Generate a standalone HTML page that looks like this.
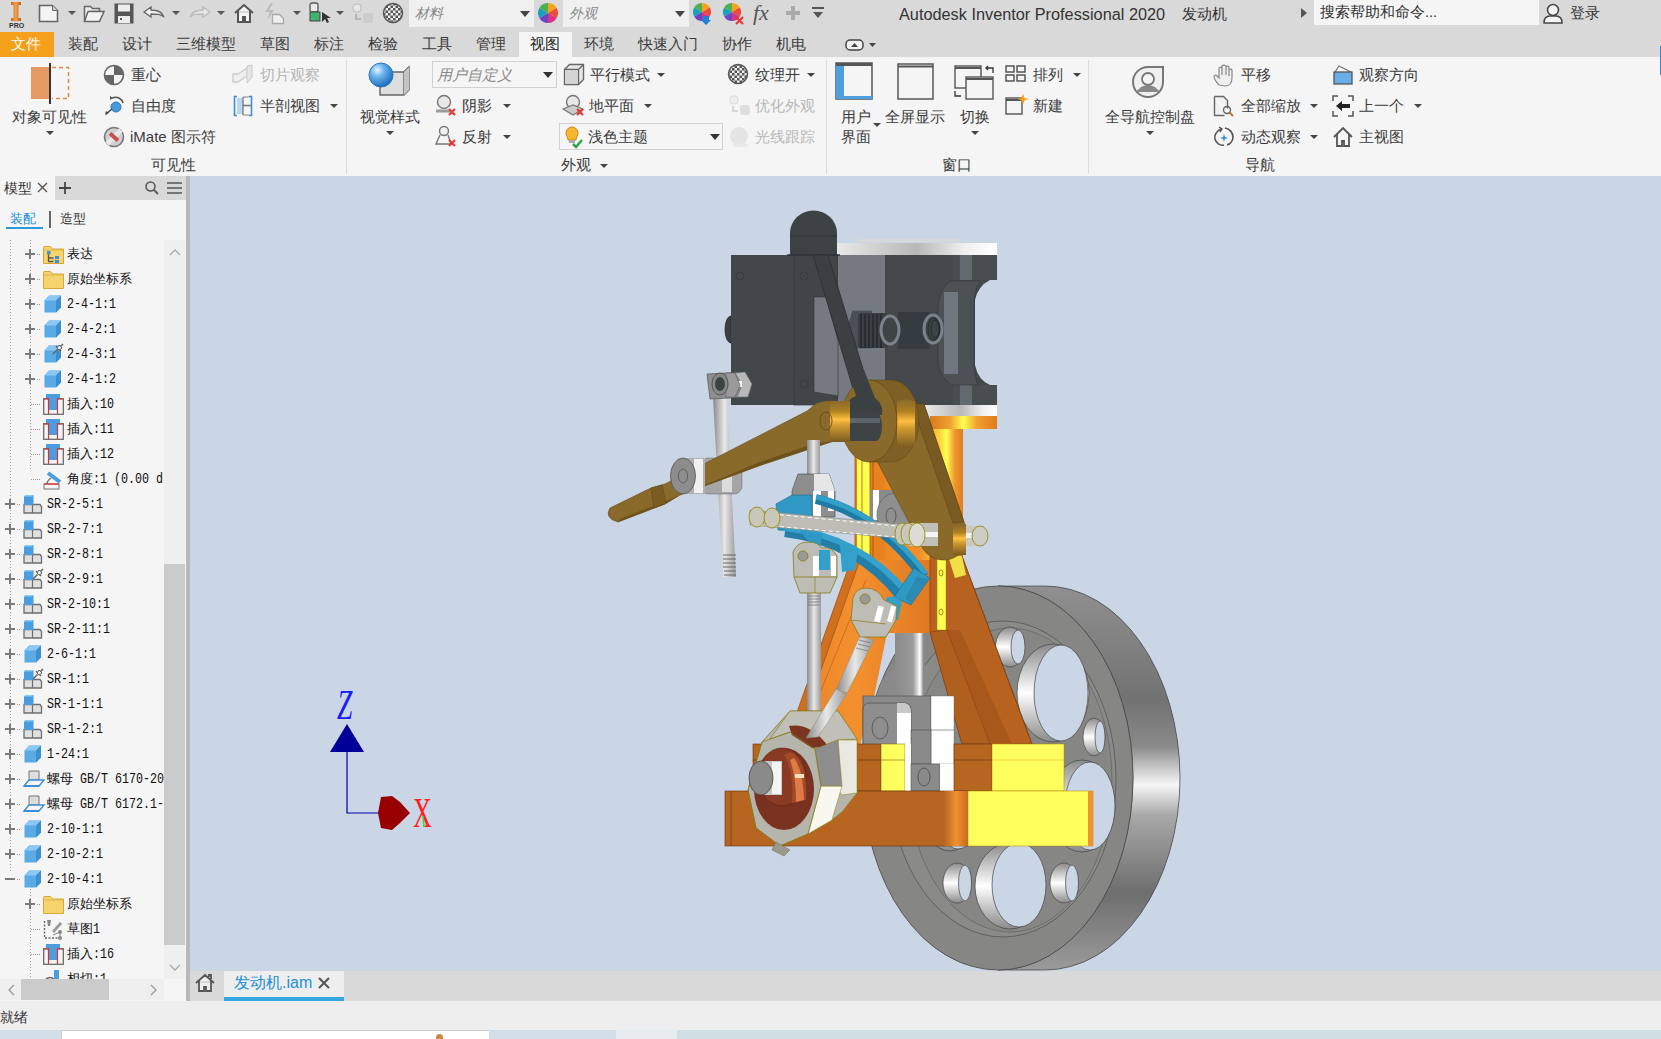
<!DOCTYPE html>
<html><head><meta charset="utf-8">
<style>
*{margin:0;padding:0;box-sizing:border-box}
html,body{width:1661px;height:1039px;overflow:hidden;background:#f5f5f5;font-family:"Liberation Sans",sans-serif;color:#3b3b3b}
.a{position:absolute}
.t{position:absolute;white-space:nowrap;font-size:15px;line-height:18px}
.m{font-family:"Liberation Mono",monospace;font-size:14.5px;transform:scaleX(.805);transform-origin:0 50%}
svg{position:absolute;overflow:visible}
.arr{position:absolute;width:0;height:0;border-left:4px solid transparent;border-right:4px solid transparent;border-top:4px solid #444}
</style></head><body>
<!-- title bar -->
<div class="a" style="left:0;top:0;width:1661px;height:32px;background:#d9d9d9"></div>
<!-- tab row -->
<div class="a" style="left:0;top:32px;width:1661px;height:25px;background:#d9d9d9"></div>
<div class="a" style="left:0;top:32px;width:54px;height:25px;background:#f5a01a"></div>
<div class="a" style="left:519px;top:32px;width:53px;height:25px;background:#f5f5f5"></div>
<!-- ribbon -->
<div class="a" style="left:0;top:57px;width:1661px;height:119px;background:#f5f5f5"></div>

<!-- title bar content -->
<svg style="left:8px;top:2px" width="18" height="28" viewBox="0 0 18 28">
<defs><linearGradient id="ig" x1="0" x2="1"><stop offset="0" stop-color="#c96a1a"/><stop offset=".5" stop-color="#f0a050"/><stop offset="1" stop-color="#b85a10"/></linearGradient></defs>
<path d="M3 0h10v3h-2.5v13h2.5v3h-10v-3h2.5v-13h-2.5z" fill="url(#ig)"/>
<text x="1" y="26" font-size="7" font-family="Liberation Sans" font-weight="bold" fill="#333">PRO</text>
</svg>
<svg style="left:38px;top:3px" width="22" height="20"><path d="M1.5 2.5h13l5 5v11h-18z" fill="#f4f4f4" stroke="#666" stroke-width="1.6"/><path d="M14.5 2.5v5h5" fill="#ccc" stroke="#666" stroke-width="1"/></svg>
<div class="arr" style="left:68px;top:11px;border-top-color:#555"></div>
<svg style="left:83px;top:3px" width="22" height="20"><path d="M1.5 3.5h6l2 2h7v3h-10l-5 10z" fill="#eee" stroke="#666" stroke-width="1.5"/><path d="M5 8.5h16l-4.5 10h-15z" fill="#f4f4f4" stroke="#666" stroke-width="1.5"/></svg>
<svg style="left:114px;top:3px" width="21" height="21"><rect x="0.5" y="0.5" width="19" height="20" fill="#555"/><rect x="4" y="1.5" width="12" height="7" fill="#eee"/><rect x="4" y="13" width="12" height="7" fill="#eee"/><rect x="6" y="15" width="2" height="2" fill="#555"/></svg>
<svg style="left:143px;top:6px" width="22" height="14"><path d="M1 6l7-5v3c6 0 11 1 13 7c-3-3-7-3-13-3v3z" fill="#f0f0f0" stroke="#666" stroke-width="1.3"/></svg>
<div class="arr" style="left:172px;top:11px;border-top-color:#555"></div>
<svg style="left:189px;top:6px" width="22" height="14"><path d="M21 6l-7-5v3c-6 0-11 1-13 7c3-3 7-3 13-3v3z" fill="#e6e6e6" stroke="#bbb" stroke-width="1.3"/></svg>
<div class="arr" style="left:217px;top:11px;border-top-color:#555"></div>
<svg style="left:233px;top:3px" width="22" height="21"><path d="M2 10l9-8 9 8M5 8v11h5v-5h2v5h5v-11" fill="#f4f4f4" stroke="#555" stroke-width="2"/></svg>
<svg style="left:263px;top:3px" width="24" height="21"><path d="M8 0l-6 9h5l-3 8 7-10h-5l4-7z" fill="#bbb"/><path d="M9.5 11.5h7l4 4v5h-11z" fill="#eee" stroke="#aaa" stroke-width="1.3"/></svg>
<div class="arr" style="left:293px;top:11px;border-top-color:#555"></div>
<svg style="left:309px;top:2px" width="22" height="22"><rect x="1" y="1" width="8" height="9" rx="2" fill="#e8e8e8" stroke="#555" stroke-width="1.3"/><rect x="1" y="10" width="10" height="9" fill="#45b26b" stroke="#444" stroke-width="1"/><path d="M13 10l0 10 3-3 2 4 2-1-2-4h4z" fill="#333"/></svg>
<div class="arr" style="left:336px;top:11px;border-top-color:#555"></div>
<svg style="left:352px;top:3px" width="22" height="20"><rect x="1" y="1" width="8" height="8" rx="3" fill="#e6e6e6" stroke="#bbb"/><path d="M4 11v5h5" fill="none" stroke="#aaa" stroke-width="1.5"/><rect x="11" y="10" width="10" height="10" rx="3" fill="#ccc"/></svg>
<svg style="left:383px;top:3px" width="22" height="22"><defs><pattern id="ck" width="5" height="5" patternUnits="userSpaceOnUse"><rect width="5" height="5" fill="#eee"/><rect width="2.5" height="2.5" fill="#555"/><rect x="2.5" y="2.5" width="2.5" height="2.5" fill="#555"/></pattern></defs><circle cx="10" cy="10" r="9.5" fill="url(#ck)" stroke="#555" stroke-width="1.5"/></svg>
<div class="a" style="left:409px;top:0;width:125px;height:27px;background:#f0f0f0"></div>
<div class="t" style="left:415px;top:4px;font-style:italic;color:#888;font-size:14px">材料</div>
<div class="arr" style="left:520px;top:11px;border-left-width:5px;border-right-width:5px;border-top:6px solid #444"></div>
<svg style="left:537px;top:2px" width="22" height="22"><g transform="translate(11,11)">
<path d="M0 0L0-10A10 10 0 0 1 8.66-5z" fill="#f7a21b"/><path d="M0 0L8.66-5A10 10 0 0 1 8.66 5z" fill="#e74c3c"/><path d="M0 0L8.66 5A10 10 0 0 1 0 10z" fill="#d63384"/><path d="M0 0L0 10A10 10 0 0 1-8.66 5z" fill="#6f42c1"/><path d="M0 0L-8.66 5A10 10 0 0 1-8.66-5z" fill="#17a2b8"/><path d="M0 0L-8.66-5A10 10 0 0 1 0-10z" fill="#4caf50"/></g></svg>
<div class="a" style="left:563px;top:0;width:126px;height:27px;background:#f0f0f0"></div>
<div class="t" style="left:569px;top:4px;font-style:italic;color:#888;font-size:14px">外观</div>
<div class="arr" style="left:675px;top:11px;border-left-width:5px;border-right-width:5px;border-top:6px solid #444"></div>
<svg style="left:692px;top:2px" width="24" height="24"><g transform="translate(10,10)">
<path d="M0 0L0-9A9 9 0 0 1 7.8-4.5z" fill="#f7a21b"/><path d="M0 0L7.8-4.5A9 9 0 0 1 7.8 4.5z" fill="#e74c3c"/><path d="M0 0L7.8 4.5A9 9 0 0 1 0 9z" fill="#d63384"/><path d="M0 0L0 9A9 9 0 0 1-7.8 4.5z" fill="#6f42c1"/><path d="M0 0L-7.8 4.5A9 9 0 0 1-7.8-4.5z" fill="#17a2b8"/><path d="M0 0L-7.8-4.5A9 9 0 0 1 0-9z" fill="#4caf50"/></g><path d="M11 14h6v4h2l-5 5-5-5h2z" fill="#1e7fd8"/></svg>
<svg style="left:722px;top:2px" width="24" height="24"><g transform="translate(10,10)">
<path d="M0 0L0-9A9 9 0 0 1 7.8-4.5z" fill="#f7a21b"/><path d="M0 0L7.8-4.5A9 9 0 0 1 7.8 4.5z" fill="#e74c3c"/><path d="M0 0L7.8 4.5A9 9 0 0 1 0 9z" fill="#d63384"/><path d="M0 0L0 9A9 9 0 0 1-7.8 4.5z" fill="#6f42c1"/><path d="M0 0L-7.8 4.5A9 9 0 0 1-7.8-4.5z" fill="#17a2b8"/><path d="M0 0L-7.8-4.5A9 9 0 0 1 0-9z" fill="#4caf50"/></g><path d="M14 15l7 7M21 15l-7 7" stroke="#e53935" stroke-width="2.2"/></svg>
<div class="t" style="left:753px;top:1px;font-family:'Liberation Serif',serif;font-style:italic;font-size:22px;color:#555;line-height:24px">fx</div>
<svg style="left:785px;top:5px" width="16" height="16"><path d="M8 1v14M1 8h14" stroke="#aaa" stroke-width="4"/></svg>
<svg style="left:811px;top:7px" width="14" height="12"><path d="M1 1h12" stroke="#555" stroke-width="2"/><path d="M2 5h10l-5 6z" fill="#555"/></svg>
<div class="t" style="left:899px;top:5px;font-size:16.3px;color:#333">Autodesk Inventor Professional 2020</div>
<div class="t" style="left:1182px;top:5px;font-size:15px;color:#333">发动机</div>
<svg style="left:1300px;top:7px" width="8" height="12"><path d="M1 1l6 5-6 5z" fill="#555"/></svg>
<div class="a" style="left:1314px;top:0;width:225px;height:25px;background:#f5f5f5"></div>
<div class="t" style="left:1320px;top:3px;font-size:14.5px;color:#333">搜索帮助和命令...</div>
<svg style="left:1543px;top:2px" width="22" height="22"><circle cx="10" cy="8" r="5.5" fill="#f4f4f4" stroke="#444" stroke-width="1.5"/><path d="M1 21c0-6 4-7 6-7h6c2 0 6 1 6 7z" fill="#f4f4f4" stroke="#444" stroke-width="1.5"/></svg>
<div class="t" style="left:1570px;top:4px;font-size:15px;color:#333">登录</div>
<!-- tabs -->
<div class="t" style="left:11px;top:35px;color:#fff">文件</div>
<div class="t" style="left:68px;top:35px">装配</div>
<div class="t" style="left:122px;top:35px">设计</div>
<div class="t" style="left:176px;top:35px">三维模型</div>
<div class="t" style="left:260px;top:35px">草图</div>
<div class="t" style="left:314px;top:35px">标注</div>
<div class="t" style="left:368px;top:35px">检验</div>
<div class="t" style="left:422px;top:35px">工具</div>
<div class="t" style="left:476px;top:35px">管理</div>
<div class="t" style="left:530px;top:35px;color:#222">视图</div>
<div class="t" style="left:584px;top:35px">环境</div>
<div class="t" style="left:638px;top:35px">快速入门</div>
<div class="t" style="left:722px;top:35px">协作</div>
<div class="t" style="left:776px;top:35px">机电</div>
<svg style="left:845px;top:39px" width="32" height="12"><rect x="1" y="1" width="17" height="10" rx="4" fill="#f0f0f0" stroke="#444" stroke-width="1.5"/><path d="M6 8l3.5-4 3.5 4z" fill="#444"/><path d="M24 4h7l-3.5 4z" fill="#444"/></svg>
<div class="a" style="left:1660px;top:46px;width:1px;height:29px;background:#2a8fe0"></div>

<!-- ribbon content -->
<div class="a" style="left:346px;top:60px;width:1px;height:114px;background:#dcdcdc"></div>
<div class="a" style="left:826px;top:60px;width:1px;height:114px;background:#dcdcdc"></div>
<div class="a" style="left:1088px;top:60px;width:1px;height:114px;background:#dcdcdc"></div>
<!-- visibility panel -->
<svg style="left:30px;top:62px" width="42" height="44"><rect x="1" y="5" width="18" height="32" fill="#e49a62"/><path d="M20 1v41" stroke="#333" stroke-width="2"/><path d="M22 5.5h16.5v31h-16.5" fill="none" stroke="#e8874a" stroke-width="1.5" stroke-dasharray="4 3"/></svg>
<div class="t" style="left:12px;top:108px">对象可见性</div>
<div class="arr" style="left:46px;top:131px"></div>
<svg style="left:103px;top:64px" width="22" height="22"><circle cx="11" cy="11" r="9.5" fill="#f4f4f4" stroke="#666" stroke-width="1.6"/><path d="M11 11V1.5A9.5 9.5 0 0 1 20.5 11z" fill="#666"/><path d="M11 11V20.5A9.5 9.5 0 0 1 1.5 11z" fill="#666"/></svg>
<div class="t" style="left:131px;top:66px">重心</div>
<svg style="left:104px;top:95px" width="22" height="22"><path d="M8 3c6-2 10 1 11 5" fill="none" stroke="#555" stroke-width="1.5"/><path d="M6 1l3 2-3 2z" fill="#555"/><circle cx="12" cy="12" r="5" fill="#4a9ad8" stroke="#2a7ac0"/><path d="M2 19l6-5" stroke="#444" stroke-width="1.5"/><path d="M1 20l1-4 3 2z" fill="#444"/></svg>
<div class="t" style="left:131px;top:97px">自由度</div>
<svg style="left:103px;top:126px" width="22" height="22"><circle cx="11" cy="11" r="9.5" fill="#d0d0d0" stroke="#777" stroke-width="1.6"/><path d="M4 18L18 4" stroke="#e8e8e8" stroke-width="5"/><path d="M7 7.5l8 7" stroke="#c9504c" stroke-width="4"/></svg>
<div class="t" style="left:130px;top:128px">iMate 图示符</div>
<svg style="left:232px;top:64px" width="22" height="22"><path d="M1 10h5l9-6v8l-9 6h-5z" fill="#eee" stroke="#ccc" stroke-width="1.3"/><path d="M15 2l5-1v12l-5 6z" fill="#e6e6e6" stroke="#ccc"/></svg>
<div class="t" style="left:260px;top:66px;color:#b4b4b4">切片观察</div>
<svg style="left:233px;top:95px" width="20" height="22"><path d="M4 1.5h-2.5v19h2.5M16 1.5h2.5v19h-2.5" fill="none" stroke="#3a8fd8" stroke-width="1.6"/><rect x="4" y="3" width="6" height="16" fill="#b8d6f0"/><path d="M10 2v18M10 10.5h8" stroke="#777" stroke-width="1.3"/><path d="M10 2h6M10 20h6" stroke="#888"/></svg>
<div class="t" style="left:260px;top:97px">半剖视图</div>
<div class="arr" style="left:330px;top:104px"></div>
<div class="t" style="left:151px;top:156px">可见性</div>
<!-- appearance panel -->
<svg style="left:368px;top:62px" width="46" height="44"><defs><radialGradient id="bl" cx=".35" cy=".3" r=".7"><stop offset="0" stop-color="#e8f4ff"/><stop offset=".4" stop-color="#6ab4ee"/><stop offset="1" stop-color="#1f6fc0"/></radialGradient></defs>
<path d="M12 10h24l5-5v23l-5 5h-24z" fill="#ddd" stroke="#666" stroke-width="1.4"/><path d="M36 10v23M36 10l5-5" stroke="#666" stroke-width="1.4" fill="none"/><path d="M36 10l5-5v23l-5 5z" fill="#c4c4c4"/>
<circle cx="13" cy="13" r="12" fill="url(#bl)" stroke="#2a74bd" stroke-width="1"/></svg>
<div class="t" style="left:360px;top:108px">视觉样式</div>
<div class="arr" style="left:386px;top:131px"></div>
<div class="a" style="left:432px;top:61px;width:125px;height:27px;border:1px solid #d2d2d2;background:#f5f5f5"></div>
<div class="t" style="left:437px;top:66px;font-style:italic;color:#888">用户自定义</div>
<div class="arr" style="left:543px;top:72px;border-left-width:5px;border-right-width:5px;border-top:6px solid #333"></div>
<svg style="left:435px;top:94px" width="22" height="24"><circle cx="9" cy="8" r="6.5" fill="#e8e8e8" stroke="#777" stroke-width="1.4"/><path d="M1 17h14" stroke="#999" stroke-width="3"/><path d="M14 15l6 6M20 15l-6 6" stroke="#e53935" stroke-width="2.2"/></svg>
<div class="t" style="left:462px;top:97px">阴影</div>
<div class="arr" style="left:503px;top:104px"></div>
<svg style="left:435px;top:125px" width="22" height="24"><circle cx="9" cy="6" r="4.5" fill="#eee" stroke="#777" stroke-width="1.4"/><path d="M5 10l-4 9h15l-3-9" fill="none" stroke="#777" stroke-width="1.4"/><path d="M14 15l6 6M20 15l-6 6" stroke="#e53935" stroke-width="2.2"/></svg>
<div class="t" style="left:462px;top:128px">反射</div>
<div class="arr" style="left:503px;top:135px"></div>
<svg style="left:563px;top:63px" width="22" height="22"><path d="M1.5 6.5l5-5h14v15l-5 5h-14z" fill="#e8e8e8" stroke="#666" stroke-width="1.4"/><path d="M1.5 6.5h14v15M15.5 6.5l5-5" fill="none" stroke="#666" stroke-width="1.4"/><rect x="2.3" y="7.3" width="12.5" height="13.5" fill="#d4d4d4"/></svg>
<div class="t" style="left:590px;top:66px">平行模式</div>
<div class="arr" style="left:657px;top:73px"></div>
<svg style="left:562px;top:94px" width="24" height="24"><circle cx="11" cy="8" r="6.5" fill="#e8e8e8" stroke="#777" stroke-width="1.4"/><path d="M1 15l10 6 10-6-10-4z" fill="#ccc" stroke="#777" stroke-width="1.2"/><path d="M15 15l6 6M21 15l-6 6" stroke="#e53935" stroke-width="2.2"/></svg>
<div class="t" style="left:589px;top:97px">地平面</div>
<div class="arr" style="left:644px;top:104px"></div>
<div class="a" style="left:559px;top:123px;width:164px;height:27px;border:1px solid #d2d2d2;background:#f5f5f5"></div>
<svg style="left:565px;top:126px" width="20" height="24"><path d="M7 1a6 6 0 0 1 6 6c0 3-2 4-2 7h-8c0-3-2-4-2-7a6 6 0 0 1 6-6z" fill="#f5b730" stroke="#c98a10"/><rect x="4" y="14" width="6" height="3" fill="#aaa"/><path d="M8 18l3 3 6-7" fill="none" stroke="#2ea44f" stroke-width="2.5"/></svg>
<div class="t" style="left:588px;top:128px">浅色主题</div>
<div class="arr" style="left:710px;top:134px;border-left-width:5px;border-right-width:5px;border-top:6px solid #333"></div>
<svg style="left:727px;top:63px" width="22" height="22"><circle cx="11" cy="11" r="9.5" fill="url(#ck)" stroke="#555" stroke-width="1.5"/></svg>
<div class="t" style="left:755px;top:66px">纹理开</div>
<div class="arr" style="left:807px;top:73px"></div>
<svg style="left:729px;top:95px" width="22" height="22"><rect x="1" y="1" width="8" height="8" rx="3" fill="#eee" stroke="#ddd"/><path d="M4 11v5h5" fill="none" stroke="#ccc" stroke-width="1.5"/><rect x="11" y="10" width="10" height="10" rx="3" fill="#ddd"/></svg>
<div class="t" style="left:755px;top:97px;color:#b8b8b8">优化外观</div>
<svg style="left:729px;top:126px" width="22" height="22"><circle cx="10" cy="10" r="9" fill="#e4e4e4"/><ellipse cx="12" cy="19" rx="8" ry="2" fill="#e8e8e8"/></svg>
<div class="t" style="left:755px;top:128px;color:#b8b8b8">光线跟踪</div>
<div class="t" style="left:561px;top:156px">外观</div>
<div class="arr" style="left:600px;top:164px"></div>
<!-- window panel -->
<svg style="left:835px;top:62px" width="40" height="40"><rect x="1" y="1" width="36" height="36" fill="#f5f5f5" stroke="#555" stroke-width="1.5"/><rect x="1" y="1" width="36" height="3" fill="#555"/><rect x="1" y="4" width="8" height="33" fill="#4f9fe0"/><rect x="1" y="34" width="36" height="3" fill="#4f9fe0"/></svg>
<div class="t" style="left:841px;top:108px">用户</div>
<div class="t" style="left:841px;top:128px">界面</div>
<div class="arr" style="left:873px;top:123px"></div>
<svg style="left:897px;top:63px" width="38" height="38"><rect x="1" y="1" width="35" height="35" fill="#f5f5f5" stroke="#555" stroke-width="1.5"/><path d="M1 3.5h35" stroke="#555" stroke-width="2"/></svg>
<div class="t" style="left:885px;top:108px">全屏显示</div>
<svg style="left:954px;top:63px" width="42" height="38"><rect x="1" y="3" width="26" height="22" fill="#f5f5f5" stroke="#555" stroke-width="1.4"/><path d="M1 5h26" stroke="#555" stroke-width="2"/><rect x="12" y="14" width="27" height="22" fill="#f5f5f5" stroke="#555" stroke-width="1.4"/><path d="M12 16h27" stroke="#555" stroke-width="2"/><path d="M32 5h7v5M34 3l-2 2 2 2" fill="none" stroke="#333" stroke-width="1.3"/><path d="M1 28v5h6" fill="none" stroke="#333" stroke-width="1.3"/></svg>
<div class="t" style="left:960px;top:108px">切换</div>
<div class="arr" style="left:971px;top:131px"></div>
<svg style="left:1005px;top:65px" width="22" height="18"><rect x="1" y="1" width="8" height="6" fill="none" stroke="#555" stroke-width="1.5"/><rect x="12" y="1" width="8" height="6" fill="none" stroke="#555" stroke-width="1.5"/><rect x="1" y="10" width="8" height="6" fill="none" stroke="#555" stroke-width="1.5"/><rect x="12" y="10" width="8" height="6" fill="none" stroke="#555" stroke-width="1.5"/></svg>
<div class="t" style="left:1033px;top:66px">排列</div>
<div class="arr" style="left:1073px;top:73px"></div>
<svg style="left:1005px;top:94px" width="24" height="22"><rect x="1" y="4" width="16" height="16" fill="#f5f5f5" stroke="#555" stroke-width="1.4"/><path d="M1 6h16" stroke="#555" stroke-width="2"/><path d="M18 0l1.5 4 4 1-4 1.5-1.5 4-1.5-4-4-1.5 4-1z" fill="#f5a01a"/></svg>
<div class="t" style="left:1033px;top:97px">新建</div>
<div class="t" style="left:942px;top:156px">窗口</div>
<!-- navigate panel -->
<svg style="left:1131px;top:65px" width="36" height="34"><path d="M17 2a15 15 0 1 0 15 15v-15z" fill="#f0f0f0" stroke="#777" stroke-width="2"/><circle cx="17" cy="14" r="6" fill="#f5f5f5" stroke="#777" stroke-width="1.8"/><path d="M6 27c3-5 7-6 11-6s8 1 11 6" fill="#888" stroke="#777"/></svg>
<div class="t" style="left:1105px;top:108px">全导航控制盘</div>
<div class="arr" style="left:1146px;top:131px"></div>
<svg style="left:1213px;top:65px" width="22" height="22"><path d="M6 20c-3-3-5-7-5-9l2-1 3 3v-10l2-1 1 1v7v-9l2-1 2 1v9v-8l2-1 1 1v9v-6l2-1 1 1v8c0 5-3 8-7 8z" fill="#eee" stroke="#888" stroke-width="1.2"/></svg>
<div class="t" style="left:1241px;top:66px">平移</div>
<svg style="left:1213px;top:95px" width="22" height="22"><path d="M1.5 1.5h9l4 4v8M1.5 1.5v19h10" fill="#f0f0f0" stroke="#666" stroke-width="1.4"/><circle cx="14" cy="15" r="3.5" fill="none" stroke="#666" stroke-width="1.4"/><path d="M16.5 17.5l3.5 3.5" stroke="#c96a1a" stroke-width="2"/></svg>
<div class="t" style="left:1241px;top:97px">全部缩放</div>
<div class="arr" style="left:1310px;top:104px"></div>
<svg style="left:1213px;top:126px" width="22" height="22"><path d="M8 3c-5 2-7 7-6 10 1 4 5 7 9 6" fill="none" stroke="#555" stroke-width="1.6"/><path d="M12 2c5 1 8 5 8 9s-3 7-6 8" fill="none" stroke="#555" stroke-width="1.6"/><path d="M6 1l3 2-2 3" fill="none" stroke="#555" stroke-width="1.4"/><path d="M11 8l1 3 3 1-3 1-1 3-1-3-3-1 3-1z" fill="#3a8fd8"/></svg>
<div class="t" style="left:1241px;top:128px">动态观察</div>
<div class="arr" style="left:1310px;top:135px"></div>
<svg style="left:1332px;top:64px" width="22" height="22"><path d="M3 8l4-6 12 6" fill="none" stroke="#777" stroke-width="1.3"/><rect x="2" y="8" width="18" height="12" fill="#6aaee8" stroke="#555" stroke-width="1.3"/></svg>
<div class="t" style="left:1359px;top:66px">观察方向</div>
<svg style="left:1332px;top:95px" width="22" height="22"><path d="M1 6v-5h5M16 1h5v5M21 16v5h-5M6 21h-5v-5" fill="none" stroke="#555" stroke-width="1.5"/><path d="M4 11l6-5v3h8v4h-8v3z" fill="#222"/></svg>
<div class="t" style="left:1359px;top:97px">上一个</div>
<div class="arr" style="left:1414px;top:104px"></div>
<svg style="left:1332px;top:126px" width="22" height="22"><path d="M2 11l9-9 9 9M5 8v12h5v-5h2v5h5v-12" fill="#f4f4f4" stroke="#555" stroke-width="1.8"/></svg>
<div class="t" style="left:1359px;top:128px">主视图</div>
<div class="t" style="left:1245px;top:156px">导航</div>
<!-- browser panel -->
<div class="a" style="left:0;top:176px;width:186px;height:824px;background:#f5f5f5"></div>
<div class="a" style="left:186px;top:176px;width:4px;height:825px;background:#b8b8b8"></div>
<!-- browser -->
<div class="a" style="left:0;top:176px;width:186px;height:24px;background:#f5f5f5"></div>
<div class="a" style="left:55px;top:176px;width:131px;height:24px;background:#d9d9d9"></div>
<div class="t" style="left:4px;top:179px;font-size:14px;color:#333">模型</div>
<svg style="left:37px;top:182px" width="11" height="11"><path d="M1 1l9 9M10 1l-9 9" stroke="#555" stroke-width="1.4"/></svg>
<svg style="left:59px;top:182px" width="12" height="12"><path d="M6 0v12M0 6h12" stroke="#444" stroke-width="1.8"/></svg>
<svg style="left:145px;top:181px" width="14" height="14"><circle cx="5.5" cy="5.5" r="4.5" fill="none" stroke="#555" stroke-width="1.5"/><path d="M9 9l4 4" stroke="#555" stroke-width="1.8"/></svg>
<svg style="left:167px;top:182px" width="15" height="12"><path d="M0 1h15M0 6h15M0 11h15" stroke="#555" stroke-width="1.7"/></svg>
<div class="t" style="left:10px;top:210px;font-size:13px;color:#1a8fd6">装配</div>
<div class="a" style="left:6px;top:227px;width:37px;height:2px;background:#2a9ae0"></div>
<div class="a" style="left:49px;top:211px;width:2px;height:17px;background:#666"></div>
<div class="t" style="left:60px;top:210px;font-size:13px;color:#333">造型</div>
<div class="a" style="left:0;top:240px;width:164px;height:739px;overflow:hidden">
<div class="a" style="left:10px;top:0px;width:1px;height:632px;background-image:linear-gradient(#a0a0a0 1px,transparent 1px);background-size:1px 3px"></div>
<div class="a" style="left:30px;top:0px;width:1px;height:230px;background-image:linear-gradient(#a0a0a0 1px,transparent 1px);background-size:1px 3px"></div>
<div class="a" style="left:30px;top:640px;width:1px;height:99px;background-image:linear-gradient(#a0a0a0 1px,transparent 1px);background-size:1px 3px"></div>
<div class="a" style="left:25px;top:13px;width:10px;height:2.4px;background:#7a7a7a"></div><div class="a" style="left:29px;top:9px;width:2.4px;height:10px;background:#7a7a7a"></div>
<div class="a" style="left:37px;top:14px;width:4px;height:1px;background-image:linear-gradient(90deg,#999 1px,transparent 1px);background-size:2px 1px"></div>
<svg style="left:43px;top:5px" width="21" height="19"><path d="M0.5 2.5v16h20v-14.5h-11l-2-2.5h-6.5z" fill="#f5d46e" stroke="#d4a83a"/><path d="M0.5 5h20" stroke="#d9b040" stroke-width="0.8"/></svg><svg style="left:43px;top:5px" width="21" height="19"><rect x="4" y="6" width="3.5" height="3.5" fill="#3a8fd8"/><path d="M5.5 9.5v7h5M5.5 13h5" stroke="#555" stroke-width="1.3" fill="none"/><rect x="12" y="11" width="4" height="3" fill="#3a8fd8"/><rect x="12" y="15" width="4" height="3" fill="#3a8fd8"/></svg>
<div class="t" style="left:67px;top:5px;font-size:13px;color:#111">表达</div>
<div class="a" style="left:25px;top:38px;width:10px;height:2.4px;background:#7a7a7a"></div><div class="a" style="left:29px;top:34px;width:2.4px;height:10px;background:#7a7a7a"></div>
<div class="a" style="left:37px;top:39px;width:4px;height:1px;background-image:linear-gradient(90deg,#999 1px,transparent 1px);background-size:2px 1px"></div>
<svg style="left:43px;top:30px" width="21" height="19"><path d="M0.5 2.5v16h20v-14.5h-11l-2-2.5h-6.5z" fill="#f5d46e" stroke="#d4a83a"/><path d="M0.5 5h20" stroke="#d9b040" stroke-width="0.8"/></svg>
<div class="t" style="left:67px;top:30px;font-size:13px;color:#111">原始坐标系</div>
<div class="a" style="left:25px;top:63px;width:10px;height:2.4px;background:#7a7a7a"></div><div class="a" style="left:29px;top:59px;width:2.4px;height:10px;background:#7a7a7a"></div>
<div class="a" style="left:37px;top:64px;width:4px;height:1px;background-image:linear-gradient(90deg,#999 1px,transparent 1px);background-size:2px 1px"></div>
<svg style="left:44px;top:55px" width="18" height="18"><path d="M0.5 5.5l4.5-5h12v12l-5 5h-11.5z" fill="#5aaae6"/><path d="M0.5 5.5l4.5-5h12l-5 5z" fill="#8cc8f5"/><path d="M12 5.5l5-5v12l-5 5z" fill="#3d8fd0"/></svg>
<div class="t m" style="left:67px;top:55px;color:#111">2-4-1:1</div>
<div class="a" style="left:25px;top:88px;width:10px;height:2.4px;background:#7a7a7a"></div><div class="a" style="left:29px;top:84px;width:2.4px;height:10px;background:#7a7a7a"></div>
<div class="a" style="left:37px;top:89px;width:4px;height:1px;background-image:linear-gradient(90deg,#999 1px,transparent 1px);background-size:2px 1px"></div>
<svg style="left:44px;top:80px" width="18" height="18"><path d="M0.5 5.5l4.5-5h12v12l-5 5h-11.5z" fill="#5aaae6"/><path d="M0.5 5.5l4.5-5h12l-5 5z" fill="#8cc8f5"/><path d="M12 5.5l5-5v12l-5 5z" fill="#3d8fd0"/></svg>
<div class="t m" style="left:67px;top:80px;color:#111">2-4-2:1</div>
<div class="a" style="left:25px;top:113px;width:10px;height:2.4px;background:#7a7a7a"></div><div class="a" style="left:29px;top:109px;width:2.4px;height:10px;background:#7a7a7a"></div>
<div class="a" style="left:37px;top:114px;width:4px;height:1px;background-image:linear-gradient(90deg,#999 1px,transparent 1px);background-size:2px 1px"></div>
<svg style="left:44px;top:105px" width="18" height="18"><path d="M0.5 5.5l4.5-5h12v12l-5 5h-11.5z" fill="#5aaae6"/><path d="M0.5 5.5l4.5-5h12l-5 5z" fill="#8cc8f5"/><path d="M12 5.5l5-5v12l-5 5z" fill="#3d8fd0"/></svg><svg style="left:52px;top:103px" width="12" height="12"><path d="M11 1l-5 5M4 3l5 5M5.5 6.5l-4.5 4.5" stroke="#666" stroke-width="1.6"/><path d="M7 2l3 3-3 2-2-2z" fill="#eee" stroke="#666"/></svg>
<div class="t m" style="left:67px;top:105px;color:#111">2-4-3:1</div>
<div class="a" style="left:25px;top:138px;width:10px;height:2.4px;background:#7a7a7a"></div><div class="a" style="left:29px;top:134px;width:2.4px;height:10px;background:#7a7a7a"></div>
<div class="a" style="left:37px;top:139px;width:4px;height:1px;background-image:linear-gradient(90deg,#999 1px,transparent 1px);background-size:2px 1px"></div>
<svg style="left:44px;top:130px" width="18" height="18"><path d="M0.5 5.5l4.5-5h12v12l-5 5h-11.5z" fill="#5aaae6"/><path d="M0.5 5.5l4.5-5h12l-5 5z" fill="#8cc8f5"/><path d="M12 5.5l5-5v12l-5 5z" fill="#3d8fd0"/></svg>
<div class="t m" style="left:67px;top:130px;color:#111">2-4-1:2</div>
<div class="a" style="left:31px;top:164px;width:10px;height:1px;background-image:linear-gradient(90deg,#999 1px,transparent 1px);background-size:2px 1px"></div>
<svg style="left:43px;top:154px" width="21" height="21"><rect x="3" y="0" width="14" height="8" fill="#4a9ee0"/><rect x="0.7" y="4.7" width="19.6" height="15.6" fill="#f5f5f5" stroke="#6a6a6a" stroke-width="1.3"/><rect x="5.5" y="4" width="9" height="12" fill="#4a9ee0"/><path d="M5.5 4v16M14.5 4v16M1 5h4.5M14.5 5h5" stroke="#e03030" stroke-width="1.2"/></svg>
<div class="t" style="left:67px;top:155px;font-size:13px;color:#111">插入</div>
<div class="t m" style="left:93px;top:155px;color:#111">:10</div>
<div class="a" style="left:31px;top:189px;width:10px;height:1px;background-image:linear-gradient(90deg,#999 1px,transparent 1px);background-size:2px 1px"></div>
<svg style="left:43px;top:179px" width="21" height="21"><rect x="3" y="0" width="14" height="8" fill="#4a9ee0"/><rect x="0.7" y="4.7" width="19.6" height="15.6" fill="#f5f5f5" stroke="#6a6a6a" stroke-width="1.3"/><rect x="5.5" y="4" width="9" height="12" fill="#4a9ee0"/><path d="M5.5 4v16M14.5 4v16M1 5h4.5M14.5 5h5" stroke="#e03030" stroke-width="1.2"/></svg>
<div class="t" style="left:67px;top:180px;font-size:13px;color:#111">插入</div>
<div class="t m" style="left:93px;top:180px;color:#111">:11</div>
<div class="a" style="left:31px;top:214px;width:10px;height:1px;background-image:linear-gradient(90deg,#999 1px,transparent 1px);background-size:2px 1px"></div>
<svg style="left:43px;top:204px" width="21" height="21"><rect x="3" y="0" width="14" height="8" fill="#4a9ee0"/><rect x="0.7" y="4.7" width="19.6" height="15.6" fill="#f5f5f5" stroke="#6a6a6a" stroke-width="1.3"/><rect x="5.5" y="4" width="9" height="12" fill="#4a9ee0"/><path d="M5.5 4v16M14.5 4v16M1 5h4.5M14.5 5h5" stroke="#e03030" stroke-width="1.2"/></svg>
<div class="t" style="left:67px;top:205px;font-size:13px;color:#111">插入</div>
<div class="t m" style="left:93px;top:205px;color:#111">:12</div>
<div class="a" style="left:31px;top:239px;width:10px;height:1px;background-image:linear-gradient(90deg,#999 1px,transparent 1px);background-size:2px 1px"></div>
<svg style="left:43px;top:230px" width="20" height="20"><path d="M3 18c0-5 2-8 5-10" fill="none" stroke="#777" stroke-width="1.4"/><path d="M5 3l12 9" stroke="#4a9ee0" stroke-width="4"/><rect x="1" y="14" width="15" height="5" fill="#f5f5f5" stroke="#777"/><path d="M1 14h15" stroke="#e03030" stroke-width="1.2"/></svg>
<div class="t" style="left:67px;top:230px;font-size:13px;color:#111">角度</div>
<div class="t m" style="left:93px;top:230px;color:#111">:1 (0.00 d</div>
<div class="a" style="left:5px;top:263px;width:10px;height:2.4px;background:#7a7a7a"></div><div class="a" style="left:9px;top:259px;width:2.4px;height:10px;background:#7a7a7a"></div>
<div class="a" style="left:17px;top:264px;width:4px;height:1px;background-image:linear-gradient(90deg,#999 1px,transparent 1px);background-size:2px 1px"></div>
<svg style="left:23px;top:255px" width="20" height="18"><path d="M1 9.5h16l1.5 2v6.5h-17.5z" fill="#e0e0e0" stroke="#6e6e6e" stroke-width="1.3"/><path d="M9.5 9.5v8.5" stroke="#6e6e6e" stroke-width="1.2"/><path d="M1 10v-8.5l1.5-1.5h8v10z" fill="#4a9ee0"/><path d="M1 1.5l1.5-1.5h8l-1.5 1.5z" fill="#8ccaf5"/></svg>
<div class="t m" style="left:47px;top:255px;color:#111">SR-2-5:1</div>
<div class="a" style="left:5px;top:288px;width:10px;height:2.4px;background:#7a7a7a"></div><div class="a" style="left:9px;top:284px;width:2.4px;height:10px;background:#7a7a7a"></div>
<div class="a" style="left:17px;top:289px;width:4px;height:1px;background-image:linear-gradient(90deg,#999 1px,transparent 1px);background-size:2px 1px"></div>
<svg style="left:23px;top:280px" width="20" height="18"><path d="M1 9.5h16l1.5 2v6.5h-17.5z" fill="#e0e0e0" stroke="#6e6e6e" stroke-width="1.3"/><path d="M9.5 9.5v8.5" stroke="#6e6e6e" stroke-width="1.2"/><path d="M1 10v-8.5l1.5-1.5h8v10z" fill="#4a9ee0"/><path d="M1 1.5l1.5-1.5h8l-1.5 1.5z" fill="#8ccaf5"/></svg>
<div class="t m" style="left:47px;top:280px;color:#111">SR-2-7:1</div>
<div class="a" style="left:5px;top:313px;width:10px;height:2.4px;background:#7a7a7a"></div><div class="a" style="left:9px;top:309px;width:2.4px;height:10px;background:#7a7a7a"></div>
<div class="a" style="left:17px;top:314px;width:4px;height:1px;background-image:linear-gradient(90deg,#999 1px,transparent 1px);background-size:2px 1px"></div>
<svg style="left:23px;top:305px" width="20" height="18"><path d="M1 9.5h16l1.5 2v6.5h-17.5z" fill="#e0e0e0" stroke="#6e6e6e" stroke-width="1.3"/><path d="M9.5 9.5v8.5" stroke="#6e6e6e" stroke-width="1.2"/><path d="M1 10v-8.5l1.5-1.5h8v10z" fill="#4a9ee0"/><path d="M1 1.5l1.5-1.5h8l-1.5 1.5z" fill="#8ccaf5"/></svg>
<div class="t m" style="left:47px;top:305px;color:#111">SR-2-8:1</div>
<div class="a" style="left:5px;top:338px;width:10px;height:2.4px;background:#7a7a7a"></div><div class="a" style="left:9px;top:334px;width:2.4px;height:10px;background:#7a7a7a"></div>
<div class="a" style="left:17px;top:339px;width:4px;height:1px;background-image:linear-gradient(90deg,#999 1px,transparent 1px);background-size:2px 1px"></div>
<svg style="left:23px;top:330px" width="20" height="18"><path d="M1 9.5h16l1.5 2v6.5h-17.5z" fill="#e0e0e0" stroke="#6e6e6e" stroke-width="1.3"/><path d="M9.5 9.5v8.5" stroke="#6e6e6e" stroke-width="1.2"/><path d="M1 10v-8.5l1.5-1.5h8v10z" fill="#4a9ee0"/><path d="M1 1.5l1.5-1.5h8l-1.5 1.5z" fill="#8ccaf5"/></svg><svg style="left:32px;top:328px" width="12" height="12"><path d="M11 1l-5 5M4 3l5 5M5.5 6.5l-4.5 4.5" stroke="#666" stroke-width="1.6"/><path d="M7 2l3 3-3 2-2-2z" fill="#eee" stroke="#666"/></svg>
<div class="t m" style="left:47px;top:330px;color:#111">SR-2-9:1</div>
<div class="a" style="left:5px;top:363px;width:10px;height:2.4px;background:#7a7a7a"></div><div class="a" style="left:9px;top:359px;width:2.4px;height:10px;background:#7a7a7a"></div>
<div class="a" style="left:17px;top:364px;width:4px;height:1px;background-image:linear-gradient(90deg,#999 1px,transparent 1px);background-size:2px 1px"></div>
<svg style="left:23px;top:355px" width="20" height="18"><path d="M1 9.5h16l1.5 2v6.5h-17.5z" fill="#e0e0e0" stroke="#6e6e6e" stroke-width="1.3"/><path d="M9.5 9.5v8.5" stroke="#6e6e6e" stroke-width="1.2"/><path d="M1 10v-8.5l1.5-1.5h8v10z" fill="#4a9ee0"/><path d="M1 1.5l1.5-1.5h8l-1.5 1.5z" fill="#8ccaf5"/></svg>
<div class="t m" style="left:47px;top:355px;color:#111">SR-2-10:1</div>
<div class="a" style="left:5px;top:388px;width:10px;height:2.4px;background:#7a7a7a"></div><div class="a" style="left:9px;top:384px;width:2.4px;height:10px;background:#7a7a7a"></div>
<div class="a" style="left:17px;top:389px;width:4px;height:1px;background-image:linear-gradient(90deg,#999 1px,transparent 1px);background-size:2px 1px"></div>
<svg style="left:23px;top:380px" width="20" height="18"><path d="M1 9.5h16l1.5 2v6.5h-17.5z" fill="#e0e0e0" stroke="#6e6e6e" stroke-width="1.3"/><path d="M9.5 9.5v8.5" stroke="#6e6e6e" stroke-width="1.2"/><path d="M1 10v-8.5l1.5-1.5h8v10z" fill="#4a9ee0"/><path d="M1 1.5l1.5-1.5h8l-1.5 1.5z" fill="#8ccaf5"/></svg>
<div class="t m" style="left:47px;top:380px;color:#111">SR-2-11:1</div>
<div class="a" style="left:5px;top:413px;width:10px;height:2.4px;background:#7a7a7a"></div><div class="a" style="left:9px;top:409px;width:2.4px;height:10px;background:#7a7a7a"></div>
<div class="a" style="left:17px;top:414px;width:4px;height:1px;background-image:linear-gradient(90deg,#999 1px,transparent 1px);background-size:2px 1px"></div>
<svg style="left:24px;top:405px" width="18" height="18"><path d="M0.5 5.5l4.5-5h12v12l-5 5h-11.5z" fill="#5aaae6"/><path d="M0.5 5.5l4.5-5h12l-5 5z" fill="#8cc8f5"/><path d="M12 5.5l5-5v12l-5 5z" fill="#3d8fd0"/></svg>
<div class="t m" style="left:47px;top:405px;color:#111">2-6-1:1</div>
<div class="a" style="left:5px;top:438px;width:10px;height:2.4px;background:#7a7a7a"></div><div class="a" style="left:9px;top:434px;width:2.4px;height:10px;background:#7a7a7a"></div>
<div class="a" style="left:17px;top:439px;width:4px;height:1px;background-image:linear-gradient(90deg,#999 1px,transparent 1px);background-size:2px 1px"></div>
<svg style="left:23px;top:430px" width="20" height="18"><path d="M1 9.5h16l1.5 2v6.5h-17.5z" fill="#e0e0e0" stroke="#6e6e6e" stroke-width="1.3"/><path d="M9.5 9.5v8.5" stroke="#6e6e6e" stroke-width="1.2"/><path d="M1 10v-8.5l1.5-1.5h8v10z" fill="#4a9ee0"/><path d="M1 1.5l1.5-1.5h8l-1.5 1.5z" fill="#8ccaf5"/></svg><svg style="left:32px;top:428px" width="12" height="12"><path d="M11 1l-5 5M4 3l5 5M5.5 6.5l-4.5 4.5" stroke="#666" stroke-width="1.6"/><path d="M7 2l3 3-3 2-2-2z" fill="#eee" stroke="#666"/></svg>
<div class="t m" style="left:47px;top:430px;color:#111">SR-1:1</div>
<div class="a" style="left:5px;top:463px;width:10px;height:2.4px;background:#7a7a7a"></div><div class="a" style="left:9px;top:459px;width:2.4px;height:10px;background:#7a7a7a"></div>
<div class="a" style="left:17px;top:464px;width:4px;height:1px;background-image:linear-gradient(90deg,#999 1px,transparent 1px);background-size:2px 1px"></div>
<svg style="left:23px;top:455px" width="20" height="18"><path d="M1 9.5h16l1.5 2v6.5h-17.5z" fill="#e0e0e0" stroke="#6e6e6e" stroke-width="1.3"/><path d="M9.5 9.5v8.5" stroke="#6e6e6e" stroke-width="1.2"/><path d="M1 10v-8.5l1.5-1.5h8v10z" fill="#4a9ee0"/><path d="M1 1.5l1.5-1.5h8l-1.5 1.5z" fill="#8ccaf5"/></svg>
<div class="t m" style="left:47px;top:455px;color:#111">SR-1-1:1</div>
<div class="a" style="left:5px;top:488px;width:10px;height:2.4px;background:#7a7a7a"></div><div class="a" style="left:9px;top:484px;width:2.4px;height:10px;background:#7a7a7a"></div>
<div class="a" style="left:17px;top:489px;width:4px;height:1px;background-image:linear-gradient(90deg,#999 1px,transparent 1px);background-size:2px 1px"></div>
<svg style="left:23px;top:480px" width="20" height="18"><path d="M1 9.5h16l1.5 2v6.5h-17.5z" fill="#e0e0e0" stroke="#6e6e6e" stroke-width="1.3"/><path d="M9.5 9.5v8.5" stroke="#6e6e6e" stroke-width="1.2"/><path d="M1 10v-8.5l1.5-1.5h8v10z" fill="#4a9ee0"/><path d="M1 1.5l1.5-1.5h8l-1.5 1.5z" fill="#8ccaf5"/></svg>
<div class="t m" style="left:47px;top:480px;color:#111">SR-1-2:1</div>
<div class="a" style="left:5px;top:513px;width:10px;height:2.4px;background:#7a7a7a"></div><div class="a" style="left:9px;top:509px;width:2.4px;height:10px;background:#7a7a7a"></div>
<div class="a" style="left:17px;top:514px;width:4px;height:1px;background-image:linear-gradient(90deg,#999 1px,transparent 1px);background-size:2px 1px"></div>
<svg style="left:24px;top:505px" width="18" height="18"><path d="M0.5 5.5l4.5-5h12v12l-5 5h-11.5z" fill="#5aaae6"/><path d="M0.5 5.5l4.5-5h12l-5 5z" fill="#8cc8f5"/><path d="M12 5.5l5-5v12l-5 5z" fill="#3d8fd0"/></svg>
<div class="t m" style="left:47px;top:505px;color:#111">1-24:1</div>
<div class="a" style="left:5px;top:538px;width:10px;height:2.4px;background:#7a7a7a"></div><div class="a" style="left:9px;top:534px;width:2.4px;height:10px;background:#7a7a7a"></div>
<div class="a" style="left:17px;top:539px;width:4px;height:1px;background-image:linear-gradient(90deg,#999 1px,transparent 1px);background-size:2px 1px"></div>
<svg style="left:23px;top:530px" width="22" height="18"><path d="M6 1h10v9h-10z" fill="#ddd" stroke="#777"/><path d="M1 16l5-6h15l-5 6z" fill="#f5f5f5" stroke="#3a8fd8" stroke-width="1.4"/><path d="M1 16h15" stroke="#3a8fd8" stroke-width="2"/></svg>
<div class="t" style="left:47px;top:530px;font-size:13px;color:#111">螺母</div>
<div class="t m" style="left:73px;top:530px;color:#111">&nbsp;GB/T 6170-20</div>
<div class="a" style="left:5px;top:563px;width:10px;height:2.4px;background:#7a7a7a"></div><div class="a" style="left:9px;top:559px;width:2.4px;height:10px;background:#7a7a7a"></div>
<div class="a" style="left:17px;top:564px;width:4px;height:1px;background-image:linear-gradient(90deg,#999 1px,transparent 1px);background-size:2px 1px"></div>
<svg style="left:23px;top:555px" width="22" height="18"><path d="M6 1h10v9h-10z" fill="#ddd" stroke="#777"/><path d="M1 16l5-6h15l-5 6z" fill="#f5f5f5" stroke="#3a8fd8" stroke-width="1.4"/><path d="M1 16h15" stroke="#3a8fd8" stroke-width="2"/></svg>
<div class="t" style="left:47px;top:555px;font-size:13px;color:#111">螺母</div>
<div class="t m" style="left:73px;top:555px;color:#111">&nbsp;GB/T 6172.1-</div>
<div class="a" style="left:5px;top:588px;width:10px;height:2.4px;background:#7a7a7a"></div><div class="a" style="left:9px;top:584px;width:2.4px;height:10px;background:#7a7a7a"></div>
<div class="a" style="left:17px;top:589px;width:4px;height:1px;background-image:linear-gradient(90deg,#999 1px,transparent 1px);background-size:2px 1px"></div>
<svg style="left:24px;top:580px" width="18" height="18"><path d="M0.5 5.5l4.5-5h12v12l-5 5h-11.5z" fill="#5aaae6"/><path d="M0.5 5.5l4.5-5h12l-5 5z" fill="#8cc8f5"/><path d="M12 5.5l5-5v12l-5 5z" fill="#3d8fd0"/></svg>
<div class="t m" style="left:47px;top:580px;color:#111">2-10-1:1</div>
<div class="a" style="left:5px;top:613px;width:10px;height:2.4px;background:#7a7a7a"></div><div class="a" style="left:9px;top:609px;width:2.4px;height:10px;background:#7a7a7a"></div>
<div class="a" style="left:17px;top:614px;width:4px;height:1px;background-image:linear-gradient(90deg,#999 1px,transparent 1px);background-size:2px 1px"></div>
<svg style="left:24px;top:605px" width="18" height="18"><path d="M0.5 5.5l4.5-5h12v12l-5 5h-11.5z" fill="#5aaae6"/><path d="M0.5 5.5l4.5-5h12l-5 5z" fill="#8cc8f5"/><path d="M12 5.5l5-5v12l-5 5z" fill="#3d8fd0"/></svg>
<div class="t m" style="left:47px;top:605px;color:#111">2-10-2:1</div>
<div class="a" style="left:5px;top:638px;width:10px;height:2.4px;background:#7a7a7a"></div>
<div class="a" style="left:17px;top:639px;width:4px;height:1px;background-image:linear-gradient(90deg,#999 1px,transparent 1px);background-size:2px 1px"></div>
<svg style="left:24px;top:630px" width="18" height="18"><path d="M0.5 5.5l4.5-5h12v12l-5 5h-11.5z" fill="#5aaae6"/><path d="M0.5 5.5l4.5-5h12l-5 5z" fill="#8cc8f5"/><path d="M12 5.5l5-5v12l-5 5z" fill="#3d8fd0"/></svg>
<div class="t m" style="left:47px;top:630px;color:#111">2-10-4:1</div>
<div class="a" style="left:25px;top:663px;width:10px;height:2.4px;background:#7a7a7a"></div><div class="a" style="left:29px;top:659px;width:2.4px;height:10px;background:#7a7a7a"></div>
<div class="a" style="left:37px;top:664px;width:4px;height:1px;background-image:linear-gradient(90deg,#999 1px,transparent 1px);background-size:2px 1px"></div>
<svg style="left:43px;top:655px" width="21" height="19"><path d="M0.5 2.5v16h20v-14.5h-11l-2-2.5h-6.5z" fill="#f5d46e" stroke="#d4a83a"/><path d="M0.5 5h20" stroke="#d9b040" stroke-width="0.8"/></svg>
<div class="t" style="left:67px;top:655px;font-size:13px;color:#111">原始坐标系</div>
<div class="a" style="left:31px;top:689px;width:10px;height:1px;background-image:linear-gradient(90deg,#999 1px,transparent 1px);background-size:2px 1px"></div>
<svg style="left:43px;top:679px" width="21" height="21"><path d="M1.5 2v17h18" fill="none" stroke="#666" stroke-width="1.4" stroke-dasharray="2 1.5"/><path d="M4 1h4l-1 6h-2z" fill="#888"/><path d="M9 12l8-9 2 2-8 9z" fill="#999"/><circle cx="17" cy="13" r="2" fill="#888"/><circle cx="17" cy="19" r="2" fill="#888"/><path d="M10 16l7-3v6" stroke="#888" fill="none"/></svg>
<div class="t" style="left:67px;top:680px;font-size:13px;color:#111">草图</div>
<div class="t m" style="left:93px;top:680px;color:#111">1</div>
<div class="a" style="left:31px;top:714px;width:10px;height:1px;background-image:linear-gradient(90deg,#999 1px,transparent 1px);background-size:2px 1px"></div>
<svg style="left:43px;top:704px" width="21" height="21"><rect x="3" y="0" width="14" height="8" fill="#4a9ee0"/><rect x="0.7" y="4.7" width="19.6" height="15.6" fill="#f5f5f5" stroke="#6a6a6a" stroke-width="1.3"/><rect x="5.5" y="4" width="9" height="12" fill="#4a9ee0"/><path d="M5.5 4v16M14.5 4v16M1 5h4.5M14.5 5h5" stroke="#e03030" stroke-width="1.2"/></svg>
<div class="t" style="left:67px;top:705px;font-size:13px;color:#111">插入</div>
<div class="t m" style="left:93px;top:705px;color:#111">:16</div>
<div class="a" style="left:31px;top:739px;width:10px;height:1px;background-image:linear-gradient(90deg,#999 1px,transparent 1px);background-size:2px 1px"></div>
<svg style="left:43px;top:729px" width="21" height="21"><circle cx="7" cy="14" r="5.5" fill="none" stroke="#666" stroke-width="1.5"/><rect x="11" y="1" width="5" height="16" fill="#4a9ee0"/><circle cx="10.5" cy="13" r="1.6" fill="#e03030"/></svg>
<div class="t" style="left:67px;top:730px;font-size:13px;color:#111">相切</div>
<div class="t m" style="left:93px;top:730px;color:#111">:1</div>
</div>
<div class="a" style="left:164px;top:240px;width:21px;height:739px;background:#efefef"></div>
<svg style="left:169px;top:248px" width="12" height="8"><path d="M1 7l5-5 5 5" fill="none" stroke="#aaa" stroke-width="1.3"/></svg>
<div class="a" style="left:164px;top:564px;width:21px;height:381px;background:#cbcbcb"></div>
<svg style="left:169px;top:964px" width="12" height="8"><path d="M1 1l5 5 5-5" fill="none" stroke="#aaa" stroke-width="1.3"/></svg>
<div class="a" style="left:0;top:979px;width:164px;height:21px;background:#efefef"></div>
<div class="a" style="left:21px;top:979px;width:88px;height:21px;background:#cbcbcb"></div>
<svg style="left:8px;top:984px" width="8" height="12"><path d="M6 1l-5 5 5 5" fill="none" stroke="#999" stroke-width="1.3"/></svg>
<svg style="left:149px;top:984px" width="8" height="12"><path d="M2 1l5 5-5 5" fill="none" stroke="#999" stroke-width="1.3"/></svg>
<!-- viewport -->
<div class="a" style="left:190px;top:176px;width:1471px;height:795px;background:#cad6e6"></div>
<!-- MODEL START -->
<svg style="left:0;top:0" width="1661" height="1039" viewBox="0 0 1661 1039">
<defs>
<linearGradient id="rimg" x1="0" x2="1"><stop offset="0" stop-color="#8a8a8a"/><stop offset=".5" stop-color="#8f8f8f"/><stop offset=".8" stop-color="#e8e8e8"/><stop offset="1" stop-color="#9a9a9a"/></linearGradient>
<linearGradient id="colg" x1="0" x2="1"><stop offset="0" stop-color="#e8821e"/><stop offset=".45" stop-color="#f7b030"/><stop offset=".6" stop-color="#fff04a"/><stop offset=".75" stop-color="#f0a030"/><stop offset="1" stop-color="#e07a1e"/></linearGradient>
<linearGradient id="plate" x1="0" x2="1"><stop offset="0" stop-color="#e8e8e8"/><stop offset=".5" stop-color="#b8b8b8"/><stop offset=".8" stop-color="#f0f0f0"/><stop offset="1" stop-color="#ffffff"/></linearGradient>
<linearGradient id="rod" x1="0" x2="1"><stop offset="0" stop-color="#8a8a8a"/><stop offset=".5" stop-color="#e8e8e8"/><stop offset="1" stop-color="#9a9a9a"/></linearGradient>
<linearGradient id="bronzeband" x1="0" y1="0" x2="0" y2="1"><stop offset="0" stop-color="#8a6a2a"/><stop offset=".25" stop-color="#b08020"/><stop offset=".45" stop-color="#ffc040"/><stop offset=".6" stop-color="#d09a30"/><stop offset="1" stop-color="#7a5a22"/></linearGradient>
<linearGradient id="orleg" x1="0" x2="1"><stop offset="0" stop-color="#e07a22"/><stop offset=".6" stop-color="#f08a2a"/><stop offset="1" stop-color="#e88228"/></linearGradient>
<linearGradient id="rimg2" gradientUnits="userSpaceOnUse" x1="0" y1="585" x2="0" y2="969"><stop offset="0" stop-color="#909090"/><stop offset=".3" stop-color="#727272"/><stop offset=".42" stop-color="#8a8a8a"/><stop offset=".52" stop-color="#f6f6f6"/><stop offset=".6" stop-color="#a8a8a8"/><stop offset=".8" stop-color="#6e6e6e"/><stop offset="1" stop-color="#9a9a9a"/></linearGradient>
<linearGradient id="holeg" x1="0" y1="0" x2="0" y2="1"><stop offset="0" stop-color="#8a8a8a"/><stop offset=".5" stop-color="#ffffff"/><stop offset="1" stop-color="#8a8a8a"/></linearGradient>
<linearGradient id="colg1" gradientUnits="userSpaceOnUse" x1="855" y1="0" x2="963" y2="0"><stop offset="0" stop-color="#e8821e"/><stop offset=".6" stop-color="#f09028"/><stop offset=".78" stop-color="#fcd040"/><stop offset=".85" stop-color="#ffff50"/><stop offset=".92" stop-color="#f09a30"/><stop offset="1" stop-color="#e07a1e"/></linearGradient>
<linearGradient id="colg2" gradientUnits="userSpaceOnUse" x1="930" y1="0" x2="997" y2="0"><stop offset="0" stop-color="#d87a1e"/><stop offset=".3" stop-color="#f0a030"/><stop offset=".5" stop-color="#ffff50"/><stop offset=".7" stop-color="#f0a030"/><stop offset="1" stop-color="#e07a1e"/></linearGradient>
<linearGradient id="pillarg" x1="0" x2="1"><stop offset="0" stop-color="#8a8a8a"/><stop offset=".6" stop-color="#9a9a9a"/><stop offset=".83" stop-color="#ffffff"/><stop offset=".95" stop-color="#8a8a8a"/></linearGradient>
<linearGradient id="colg3" x1="0" x2="1"><stop offset="0" stop-color="#b66620"/><stop offset=".5" stop-color="#f09030"/><stop offset="1" stop-color="#c86a20"/></linearGradient>
<linearGradient id="legg" gradientUnits="userSpaceOnUse" x1="780" y1="0" x2="930" y2="0"><stop offset="0" stop-color="#e88028"/><stop offset=".5" stop-color="#f3902e"/><stop offset="1" stop-color="#e07a22"/></linearGradient>
<clipPath id="vp"><rect x="190" y="176" width="1471" height="795"/></clipPath>
</defs>
<g clip-path="url(#vp)">
<!-- ===== FLYWHEEL ===== -->
<g id="flywheel">
<path d="M998 586 L1045 586 A135 192 0 0 1 1045 970 L998 970 A135 192 0 0 1 998 586z" fill="#858585"/>
<path d="M998 586 L1045 586 A135 192 0 0 1 1045 970 L998 970 A135 192 0 0 0 998 586z" fill="url(#rimg2)" stroke="#444" stroke-width="0.7"/>
<ellipse cx="998" cy="778" rx="135" ry="192" fill="#868684" stroke="#444" stroke-width="0.7"/>
<ellipse cx="1003" cy="779" rx="113" ry="158" fill="#8a8a88" stroke="#444" stroke-width="0.6"/>
<ellipse cx="1010" cy="780" rx="102" ry="152" fill="#868684" stroke="#555" stroke-width="0.5"/>
<g stroke="#444" stroke-width="0.7">
<ellipse cx="1053" cy="693" rx="36" ry="49" fill="url(#holeg)"/><ellipse cx="1061" cy="693" rx="27" ry="48" fill="#cad6e6"/>
<ellipse cx="1010" cy="886" rx="35" ry="43" fill="url(#holeg)"/><ellipse cx="1019" cy="885" rx="27" ry="42" fill="#cad6e6"/>
<ellipse cx="1082" cy="806" rx="33" ry="46" fill="url(#holeg)"/><ellipse cx="1090" cy="806" rx="25" ry="44" fill="#cad6e6"/>
<ellipse cx="950" cy="805" rx="30" ry="46" fill="url(#holeg)"/><ellipse cx="958" cy="805" rx="23" ry="44" fill="#cad6e6"/>
<ellipse cx="1010" cy="647" rx="14.5" ry="20" fill="url(#holeg)"/><ellipse cx="1018" cy="647" rx="7" ry="17" fill="#cad6e6"/>
<ellipse cx="1094" cy="737" rx="11" ry="19" fill="url(#holeg)"/><ellipse cx="1100" cy="737" rx="5" ry="16" fill="#cad6e6"/>
<ellipse cx="957" cy="883" rx="14" ry="20" fill="url(#holeg)"/><ellipse cx="965" cy="883" rx="6.5" ry="18" fill="#cad6e6"/>
<ellipse cx="1064" cy="883" rx="14" ry="20" fill="url(#holeg)"/><ellipse cx="1072" cy="883" rx="6.5" ry="18" fill="#cad6e6"/>
</g>
</g>
<!-- ===== COLUMN & A-FRAME ===== -->
<rect x="855" y="429" width="108" height="135" fill="url(#colg1)"/>
<rect x="855" y="455" width="30" height="110" fill="#e8821e"/>
<rect x="857" y="455" width="13" height="110" fill="#ffff50"/>
<path d="M855 455v110M862 455v110M870 455v110M873 455v110" stroke="#8a4a10" stroke-width="0.7"/>
<rect x="870" y="490" width="32" height="45" fill="#8a8a8a"/>
<rect x="873" y="490" width="6" height="30" fill="#fff"/>
<ellipse cx="895" cy="515" rx="18" ry="22" fill="#8e8e8e" stroke="#555" stroke-width="0.6"/>
<ellipse cx="891" cy="516" rx="5" ry="8" fill="none" stroke="#444" stroke-width="0.7"/>
<rect x="925" y="405" width="72" height="11" fill="url(#plate)"/>
<rect x="930" y="416" width="67" height="13" fill="url(#colg2)"/>
<path d="M895 668 L910 640 L905 697 L876 697 L882 680z" fill="#8a8a8a"/>
<!-- left leg -->
<path d="M851 560 L930 560 L930 633 L887 633 L874 697 L860 745 L850 790 L780 790 L797 712z" fill="url(#legg)"/>
<path d="M851 560 L860 560 L806 712 L789 790 L780 790 L797 712z" fill="#d0701f" stroke="#8a4a10" stroke-width="0.6"/>
<path d="M866 580 L815 705" stroke="#b05a18" stroke-width="0.6"/>

<!-- central pillar -->
<rect x="895" y="633" width="30" height="64" fill="url(#pillarg)"/>
<!-- right leg -->
<path d="M930 556 L962 556 L1032 744 L962 744 L930 632z" fill="#b8621f" stroke="#7a3a10" stroke-width="0.6"/>
<path d="M947 630 L960 630 L1012 744 L990 744z" fill="#a9581b"/>
<path d="M930 632 L947 630 L990 744 L962 744z" fill="#b0601e" stroke="#7a3a10" stroke-width="0.5"/>
<path d="M962 556 L1032 744" stroke="#7a3a10" stroke-width="0.6"/>
<rect x="937" y="558" width="9" height="72" fill="#ffff50" stroke="#a08020" stroke-width="0.5"/>
<ellipse cx="941" cy="573" rx="2" ry="3" fill="none" stroke="#806010" stroke-width="0.7"/>
<ellipse cx="941" cy="612" rx="2" ry="3" fill="none" stroke="#806010" stroke-width="0.7"/>
<path d="M948 556 L962 556 L966 575 L955 578z" fill="#ffff50" opacity=".8"/>
<!-- ===== BASE ===== -->
<rect x="863" y="696" width="68" height="49" fill="#8a8a8a" stroke="#444" stroke-width="0.6"/>
<path d="M863 745 V710 Q863 703 870 703 H904 Q911 703 911 710 V745z" fill="#8e8e8e" stroke="#444" stroke-width="0.6"/>
<rect x="897" y="713" width="14" height="32" fill="#fff"/>
<path d="M897 703 H904 Q911 703 911 713 H897z" fill="#c8c8c8"/>
<ellipse cx="880" cy="728" rx="8" ry="11" fill="none" stroke="#444" stroke-width="0.7"/>
<rect x="931" y="696" width="23" height="68" fill="#fff" stroke="#666" stroke-width="0.4"/>
<path d="M931 730 H954" stroke="#555" stroke-width="0.6"/>
<rect x="911" y="730" width="20" height="34" fill="#8a8a8a" stroke="#444" stroke-width="0.5"/>
<rect x="753" y="744" width="128" height="47" fill="#b66620" stroke="#6a3010" stroke-width="0.6"/>
<path d="M753 760 H881" stroke="#6a3010" stroke-width="0.6"/>
<rect x="881" y="744" width="24" height="47" fill="#ffff5e" stroke="#8a5a10" stroke-width="0.5"/>
<path d="M881 760 H905" stroke="#8a5a10" stroke-width="0.6"/>
<rect x="905" y="744" width="6" height="47" fill="#fff"/>
<rect x="911" y="764" width="29" height="27" fill="#8a8a8a" stroke="#444" stroke-width="0.5"/>
<ellipse cx="924" cy="777" rx="6" ry="9" fill="none" stroke="#444" stroke-width="0.7"/>
<rect x="940" y="764" width="14" height="27" fill="#fff"/>
<rect x="954" y="744" width="38" height="47" fill="#b66620" stroke="#6a3010" stroke-width="0.6"/>
<path d="M954 760 H992" stroke="#6a3010" stroke-width="0.6"/>
<rect x="992" y="744" width="72" height="47" fill="#ffff5e" stroke="#b08000" stroke-width="0.5"/>
<path d="M992 760 H1064" stroke="#c9a000" stroke-width="0.4"/>
<rect x="725" y="791" width="243" height="55" fill="#b66620" stroke="#6a3010" stroke-width="0.6"/>
<path d="M731 791 V846" stroke="#6a3010" stroke-width="0.6"/>
<rect x="944" y="791" width="24" height="55" fill="url(#colg3)"/>
<rect x="968" y="791" width="125" height="55" fill="#ffff5e" stroke="#b08000" stroke-width="0.5"/>
<rect x="1088" y="791" width="5" height="55" fill="#f09030"/>
<!-- ===== CYLINDER BLOCK ===== -->
<path d="M731 316 A6 13.5 0 0 0 731 343z" fill="#3a3f44" stroke="#23272b" stroke-width="0.8"/>
<rect x="731" y="255" width="63" height="150" fill="#42474a"/>
<rect x="794" y="255" width="44" height="150" fill="#404548" stroke="#33383c" stroke-width="0.7"/>
<rect x="838" y="255" width="47" height="150" fill="#747a80"/>
<rect x="885" y="255" width="68" height="150" fill="#43484b"/>
<rect x="953" y="255" width="44" height="25" fill="#484d50"/>
<rect x="953" y="385" width="44" height="20" fill="#484d50"/>
<rect x="960" y="255" width="12" height="25" fill="#626a71"/>
<rect x="960" y="385" width="12" height="20" fill="#626a71"/>
<path d="M953 280 H990 Q978 286 975 300 V365 Q978 380 990 385 H953z" fill="#43484b"/>
<path d="M950 281 Q940 290 938 305 V362 Q940 378 952 385 H978 Q974 375 974 360 V305 Q974 290 980 281z" fill="#4c5154" stroke="#33383c" stroke-width="0.6"/>
<rect x="944" y="292" width="14" height="82" fill="#6f7880"/>
<circle cx="740" cy="276" r="4" fill="none" stroke="#33383c" stroke-width="0.7"/>
<circle cx="804" cy="276" r="4" fill="none" stroke="#33383c" stroke-width="0.7"/>
<circle cx="804" cy="384" r="4" fill="none" stroke="#33383c" stroke-width="0.7"/>
<path d="M814 297 L826 297 L838 340 V396 L814 392z" fill="#747a80" stroke="#33383c" stroke-width="0.6"/>
<rect x="837" y="243" width="160" height="12" fill="url(#plate)"/>
<rect x="858" y="239" width="101" height="3" fill="#d8d8d8"/>
<path d="M790 255 V233 A23 22 0 0 1 837 233 V255z" fill="#3d4245"/>
<path d="M790 236 H837" stroke="#2e3338" stroke-width="0.8"/>
<path d="M787 255 H840" stroke="#2e3338" stroke-width="1.5"/>
<!-- fittings -->
<path d="M852 310 L872 310 L878 329 L872 349 L852 349 L846 329z" fill="#4a5055" stroke="#7a838b" stroke-width="1"/>
<rect x="858" y="313" width="30" height="35" rx="4" fill="#3a3f44"/>
<g stroke="#1f2327" stroke-width="1.2"><path d="M861 314v34M865 314v34M869 314v34M873 314v34M877 314v34M881 314v34"/></g>
<rect x="898" y="312" width="32" height="37" fill="#363b40"/>
<ellipse cx="890" cy="330" rx="9" ry="14" fill="#3e4346" stroke="#7a838b" stroke-width="3"/>
<ellipse cx="933" cy="329" rx="9" ry="14" fill="#3e4346" stroke="#7a838b" stroke-width="3"/>
<g stroke="#1f2327" stroke-width="0.8" fill="none"><ellipse cx="934" cy="329" rx="6" ry="11"/><ellipse cx="935" cy="329" rx="4" ry="9"/></g>
<!-- rocker link on block -->
<path d="M813 255 L828 255 L875 408 L860 412z" fill="#3b4043" stroke="#2a2f33" stroke-width="0.8"/>
<!-- ===== VALVE ROD LEFT ===== -->
<path d="M713 398 L727 398 L736 577 L723 577z" fill="url(#rod)"/>
<g stroke="#666" stroke-width="1"><path d="M723 555h13M723 559h13M723 563h13M723 567h13M724 571h12M724 575h12"/></g>
<path d="M707 374 L745 372 L752 384 L748 397 L710 399z" fill="#8e8e8e" stroke="#555" stroke-width="0.7"/>
<path d="M735 373 L745 372 L752 384 L748 397 L737 397 L742 385z" fill="#b8b8b8" stroke="#555" stroke-width="0.5"/>
<rect x="736" y="381" width="6" height="6" fill="#f4f4f4"/>
<path d="M726 373 L735 373 L740 385 L735 397 L726 397z" fill="#9a9a9a" stroke="#555" stroke-width="0.5"/>
<ellipse cx="720" cy="384" rx="8" ry="11" fill="#8a8a8a" stroke="#444" stroke-width="0.8"/>
<ellipse cx="720" cy="384" rx="5" ry="7" fill="#3d4245"/>
<!-- ===== CRANK HUB & BRONZE LINK ===== -->
<!-- link body -->
<path d="M874 455 L912 404 L924 404 L964 522 A22 22 0 0 1 923 549z" fill="#8a6a2a" stroke="#5e4518" stroke-width="0.6"/>
<path d="M912 404 L924 404 L964 522 L953 523z" fill="#785a22" stroke="#5e4518" stroke-width="0.5"/>
<rect x="953" y="525" width="13" height="30" fill="url(#bronzeband)"/>
<!-- hub -->
<path d="M869 380 H891 A28 41 0 0 1 891 462 H869z" fill="#7e6024" stroke="#5e4518" stroke-width="0.5"/>
<path d="M897 401 Q905 398 915 401 V446 Q905 449 897 446z" fill="url(#bronzeband)"/>
<ellipse cx="869" cy="421" rx="28" ry="41" fill="#8a6a2a" stroke="#5e4518" stroke-width="0.6"/>
<path d="M848 370 L864 370 L875 398 Q884 405 882 415 L845 415 Q845 400 856 396z" fill="#3b4043"/>
<path d="M848 412 H876 A6 14.5 0 0 1 876 441 H848z" fill="#3e4346"/>
<rect x="848" y="418" width="32" height="5" fill="#5d656b"/>
<!-- washer back -->
<rect x="700" y="458" width="42" height="36" rx="8" fill="#a5a5a5" stroke="#666" stroke-width="0.5"/>
<rect x="722" y="462" width="10" height="30" fill="#dcdcdc"/>
<!-- lever arm -->
<path d="M618 522 L665 504 L680 495 L760 465.5 L834 441 L834 401 Q822 400 813 408 L665 484 L651 488 L610 508 Q604 518 618 522z" fill="#8a6a2a" stroke="#6a4e1a" stroke-width="0.7"/>
<path d="M620 519 L666 501 L760 462 L834 437 L834 441 L760 465.5 L680 495 L665 504 L618 522z" fill="#6e521c"/>
<path d="M651 488 L662 485 L666 503 L654 508z" fill="#7a5c22" stroke="#5e4518" stroke-width="0.5"/>
<path d="M808 410 Q816 400 834 401 L834 441 Q816 444 806 441z" fill="#8a6a2a"/>
<rect x="830" y="401" width="20" height="41" fill="url(#bronzeband)"/>
<ellipse cx="826" cy="421" rx="6" ry="9" fill="none" stroke="#5e4518" stroke-width="0.8"/>
<!-- washer on lever front -->
<rect x="683" y="458" width="22" height="36" fill="#b0b0b0"/>
<rect x="694" y="459" width="9" height="34" fill="#f0f0f0"/>
<ellipse cx="683" cy="476" rx="12.5" ry="18" fill="#8d8d8d" stroke="#555" stroke-width="0.8"/>
<ellipse cx="683" cy="476" rx="4.6" ry="7" fill="none" stroke="#555" stroke-width="0.8"/>
<!-- ===== VERTICAL RODS CENTER ===== -->
<rect x="807" y="440" width="13" height="35" fill="url(#rod)"/>
<rect x="807" y="593" width="14" height="132" fill="url(#rod)"/>
<g stroke="#777" stroke-width="0.8"><path d="M808 596h12M808 599h12M808 602h12M808 605h12"/></g>
<path d="M860 636 L874 640 L847 693 L836 690z" fill="url(#rod)" stroke="#8a8a70" stroke-width="0.5"/>
<g stroke="#777" stroke-width="0.8"><path d="M859 640l12 3M858 644l12 3M856 648l12 3"/></g>
<!-- upper clevis -->
<path d="M798 474 H829 L835 491 V517 H792 V491z" fill="#8e8e8e" stroke="#444" stroke-width="0.6"/>
<path d="M814 474 H829 L835 491 H814z" fill="#e6e6e6"/>
<rect x="813" y="491" width="8" height="26" fill="#fff"/>
<rect x="828" y="491" width="6" height="20" fill="#fff"/>
<ellipse cx="802" cy="510" rx="6" ry="7" fill="#777" stroke="#444" stroke-width="0.6"/>
<!-- blue link -->
<path d="M776 504 L792 495 L812 495 L812 532 L778 530z" fill="#2f98c4" stroke="#1d6a8c" stroke-width="0.6"/>
<path d="M816 499 Q878 514 924 577" fill="none" stroke="#1f7aa3" stroke-width="10"/>
<path d="M816 497 Q878 511 926 574" fill="none" stroke="#33a0cc" stroke-width="5"/>
<path d="M785 531 Q858 540 902 596" fill="none" stroke="#237ea8" stroke-width="12"/>
<path d="M785 528 Q860 536 906 592" fill="none" stroke="#35a2ce" stroke-width="6"/>
<path d="M914 568 L930 578 L911 605 L894 597z" fill="#2f98c4" stroke="#1d6a8c" stroke-width="0.6"/>
<path d="M917 577 L929 579 L911 604 L905 598z" fill="#2a8ab4"/>
<path d="M800 530 Q808 545 820 548 L822 534z" fill="#2f98c4"/>
<path d="M840 545 Q850 540 858 550 L855 570 L842 572z" fill="#33a0cc"/>
<path d="M886 598 Q895 594 902 602 L898 620 L888 620z" fill="#33a0cc"/>
<!-- horizontal slanted rod -->
<path d="M750 510 L930 527 L930 541 L750 525z" fill="#bdbdb5" stroke="#888" stroke-width="0.6"/>
<path d="M752 512 L928 529" stroke="#fff" stroke-width="1" stroke-dasharray="4 3"/>
<path d="M752 524 L928 540" stroke="#fff" stroke-width="1" stroke-dasharray="4 3"/>
<ellipse cx="757" cy="517" rx="8" ry="10" fill="#c8c8b8" stroke="#a09020" stroke-width="1"/>
<ellipse cx="772" cy="518" rx="8" ry="10" fill="#c8c8b8" stroke="#a09020" stroke-width="1"/>
<rect x="908" y="523" width="30" height="23" fill="#c0c0b8"/>
<rect x="908" y="532" width="30" height="5" fill="#f6f6f6"/>
<ellipse cx="902" cy="534" rx="7" ry="11" fill="#c8c8b8" stroke="#a09020" stroke-width="1"/>
<ellipse cx="908" cy="534" rx="7" ry="11" fill="#c8c8b8" stroke="#a09020" stroke-width="1"/>
<ellipse cx="917" cy="535" rx="8" ry="12" fill="#dcdcd4" stroke="#a09020" stroke-width="1"/>
<rect x="966" y="526" width="14" height="20" fill="#c8c8c0"/>
<rect x="966" y="533" width="14" height="5" fill="#f4f4f4"/>
<ellipse cx="980" cy="536" rx="8" ry="10" fill="#ccccc4" stroke="#a09020" stroke-width="1"/>
<!-- lower clevises -->
<path d="M793 552 Q797 542 808 542 Q818 542 822 548 Q832 546 837 556 V577 L830 593 H800 L794 577z" fill="#bdbdb5" stroke="#8a7a10" stroke-width="0.8"/>
<path d="M794 577 H837" stroke="#8a7a10" stroke-width="0.8"/>
<path d="M815 577 V593" stroke="#8a7a10" stroke-width="0.6"/>
<rect x="813" y="556" width="6" height="20" fill="#fff"/>
<rect x="831" y="556" width="5" height="20" fill="#fff"/>
<rect x="819" y="550" width="11" height="20" fill="#33a0cc"/>
<circle cx="803" cy="556" r="5" fill="#999" stroke="#8a7a10" stroke-width="0.8"/>
<path d="M853 598 Q856 588 866 588 Q878 588 884 600 L897 606 L896 620 L886 637 L860 637 L851 620z" fill="#bdbdb5" stroke="#8a7a10" stroke-width="0.8"/>
<path d="M851 620 L886 624" stroke="#8a7a10" stroke-width="0.7"/>
<rect x="876" y="606" width="6" height="16" fill="#fff" transform="rotate(15 879 614)"/>
<rect x="889" y="606" width="5" height="16" fill="#fff" transform="rotate(15 891 614)"/>
<circle cx="865" cy="599" r="5" fill="#999" stroke="#8a7a10" stroke-width="0.8"/>
<!-- ===== HEX NUT & COPPER ===== -->
<path d="M748 790 L762 742 L790 711 L838 711 L857 739 L857 793 L842 812 L832 820 L808 834 L780 846 L756 828z" fill="#b5b5ad" stroke="#8a7a10" stroke-width="0.8"/>
<path d="M790 711 L838 711 L857 739 L838 740 L815 749 L790 732 L770 739z" fill="#c0c0b8" stroke="#8a7a10" stroke-width="0.6"/>
<path d="M789 726 Q810 722 828 746 L812 748 L792 735z" fill="#7a3420"/>
<path d="M838 740 H857 V793 L842 795 L838 790z" fill="#e8e8e0" stroke="#8a7a10" stroke-width="0.5"/>
<path d="M821 786 L842 786 L832 820 L808 834z" fill="#f8f8f0" stroke="#8a7a10" stroke-width="0.5"/>
<path d="M815 749 L838 740 L842 786 L821 786z" fill="#8e8e8e" stroke="#8a7a10" stroke-width="0.5"/>
<path d="M762 742 L790 732 L815 749 L821 786 L808 834 L780 846 L756 828 L748 790z" fill="none" stroke="#8a7a10" stroke-width="0.7"/>
<ellipse cx="784" cy="789" rx="30" ry="41" fill="#7a3220"/>
<ellipse cx="782" cy="777" rx="24" ry="29" fill="#883a22" stroke="#5a2010" stroke-width="0.6"/>
<path d="M790 752 Q808 760 806 800 L792 803 Q794 770 784 755z" fill="#a04a28"/>
<path d="M794 758 Q803 770 804 800 L796 802 Q796 775 790 760z" fill="#e07a48"/>
<rect x="795" y="774" width="9" height="4" fill="#ffe0c0"/>
<rect x="761" y="761" width="21" height="34" fill="#c8c8c8"/>
<rect x="772" y="762" width="9" height="32" fill="#f4f4f4"/>
<ellipse cx="761" cy="778" rx="12" ry="17" fill="#8a8a8a" stroke="#444" stroke-width="0.8"/>
<path d="M776 842 L790 850 L784 856 L772 850z" fill="#9a9a8a" stroke="#6a6a50" stroke-width="0.5"/>
<path d="M836 689 L847 694 L818 737 L806 738z" fill="url(#rod)" stroke="#8a8a70" stroke-width="0.5"/>
<!-- ===== TRIAD ===== -->
<path d="M347 752 V813 H380" fill="none" stroke="#0000b0" stroke-width="1.2"/>
<path d="M380 813 H390" stroke="#c00000" stroke-width="1.2"/>
<path d="M330 752 L347 724 L364 752z" fill="#000098"/>
<path d="M381 797 L392 796 L400 802 L410 813 L400 823 L392 830 L381 828 L378 813z" fill="#980000"/>
<text transform="translate(337 719) scale(0.66 1)" font-family="Liberation Serif" font-style="italic" font-size="42" fill="#1a1aff">Z</text>
<text transform="translate(413 827) scale(0.62 1)" font-family="Liberation Serif" font-size="42" fill="#ff2020">X</text><path d="M423 816 L424 827" stroke="#30e030" stroke-width="1.5"/>
</g>
</svg>

<!-- MODEL END -->
<!-- doc tab bar -->
<div class="a" style="left:190px;top:971px;width:1471px;height:30px;background:#d9d9d9"></div>
<div class="a" style="left:224px;top:971px;width:120px;height:30px;background:#eeeeee"></div>
<div class="a" style="left:224px;top:997px;width:120px;height:4px;background:#34a7e0"></div>
<svg style="left:194px;top:973px" width="22" height="20"><path d="M2 10l9-8 9 8M5 8v10h5v-4h2v4h5v-10M15 4v-2h2v4" fill="#eee" stroke="#555" stroke-width="1.8"/></svg>
<div class="t" style="left:234px;top:973px;font-size:16px;line-height:20px;color:#1f8fd8">发动机.iam</div>
<svg style="left:318px;top:977px" width="12" height="12"><path d="M1 1l10 10M11 1l-10 10" stroke="#555" stroke-width="2"/></svg>
<!-- status -->
<div class="a" style="left:0;top:1001px;width:1661px;height:29px;background:#eeeeee"></div>
<div class="t" style="left:0;top:1008px;font-size:14px;color:#333">就绪</div>
<div class="a" style="left:0;top:1030px;width:1661px;height:9px;background:#d3dee8"></div>
<div class="a" style="left:61px;top:1030px;width:428px;height:9px;background:#fff;border-top:1px solid #ccc;border-left:1px solid #ccc"></div>
<div class="a" style="left:436px;top:1034px;width:7px;height:7px;border-radius:50%;background:#c8883a"></div>
<div class="a" style="left:616px;top:1030px;width:61px;height:9px;background:#e6ecf0"></div>
<div class="a" style="left:677px;top:1030px;width:984px;height:9px;background:#cfdfe3"></div>
</body></html>
